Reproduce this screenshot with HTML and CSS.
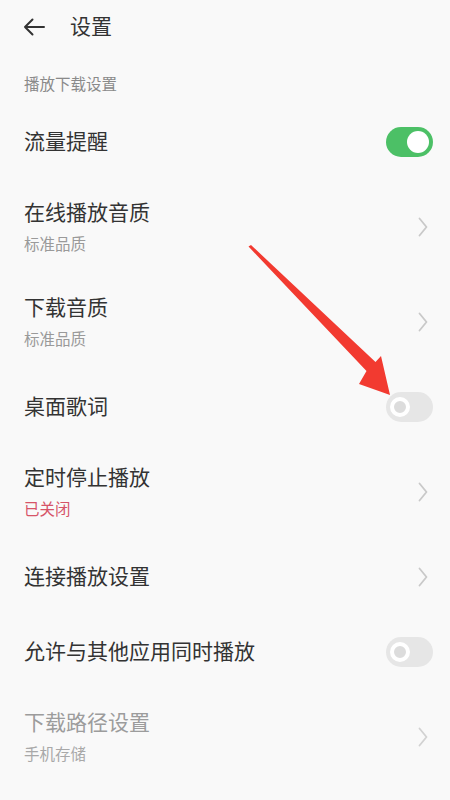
FILE: index.html
```html
<!DOCTYPE html>
<html lang="zh">
<head>
<meta charset="utf-8">
<link rel="stylesheet" href="styles.css">
</head>
<body>
<div class="page">
  <header class="topbar">
    <svg class="back" width="22" height="18" viewBox="0 0 22 18"><path d="M21 9H2M9.5 1.5L2 9l7.5 7.5" fill="none" stroke="#333" stroke-width="2" stroke-linecap="round" stroke-linejoin="round"/></svg>
    <span class="title">设置</span>
  </header>
  <div class="section">播放下载设置</div>
  <div class="list">
    <div class="row single">
      <div class="text"><div class="main">流量提醒</div></div>
      <div class="toggle on"><span class="knob"></span></div>
    </div>
    <div class="row double">
      <div class="text"><div class="main">在线播放音质</div><div class="sub">标准品质</div></div>
      <svg class="chev" width="10" height="20" viewBox="0 0 10 20"><path d="M1.5 1.5L8.5 10l-7 8.5" fill="none" stroke="#c9c9c9" stroke-width="1.8" stroke-linecap="round" stroke-linejoin="round"/></svg>
    </div>
    <div class="row double">
      <div class="text"><div class="main">下载音质</div><div class="sub">标准品质</div></div>
      <svg class="chev" width="10" height="20" viewBox="0 0 10 20"><path d="M1.5 1.5L8.5 10l-7 8.5" fill="none" stroke="#c9c9c9" stroke-width="1.8" stroke-linecap="round" stroke-linejoin="round"/></svg>
    </div>
    <div class="row single">
      <div class="text"><div class="main">桌面歌词</div></div>
      <div class="toggle off"><span class="knob"></span></div>
    </div>
    <div class="row double">
      <div class="text"><div class="main">定时停止播放</div><div class="sub red">已关闭</div></div>
      <svg class="chev" width="10" height="20" viewBox="0 0 10 20"><path d="M1.5 1.5L8.5 10l-7 8.5" fill="none" stroke="#c9c9c9" stroke-width="1.8" stroke-linecap="round" stroke-linejoin="round"/></svg>
    </div>
    <div class="row single">
      <div class="text"><div class="main">连接播放设置</div></div>
      <svg class="chev" width="10" height="20" viewBox="0 0 10 20"><path d="M1.5 1.5L8.5 10l-7 8.5" fill="none" stroke="#c9c9c9" stroke-width="1.8" stroke-linecap="round" stroke-linejoin="round"/></svg>
    </div>
    <div class="row single">
      <div class="text"><div class="main">允许与其他应用同时播放</div></div>
      <div class="toggle off"><span class="knob"></span></div>
    </div>
    <div class="row double disabled">
      <div class="text"><div class="main">下载路径设置</div><div class="sub">手机存储</div></div>
      <svg class="chev" width="10" height="20" viewBox="0 0 10 20"><path d="M1.5 1.5L8.5 10l-7 8.5" fill="none" stroke="#d2d2d2" stroke-width="1.8" stroke-linecap="round" stroke-linejoin="round"/></svg>
    </div>
  </div>
  <svg class="pointer" width="450" height="800" viewBox="0 0 450 800"><polygon points="248.5,246.5 251,245 375.5,362 381,356 390,395 359,384 366.5,371" fill="#f23a30"/></svg>
</div>
</body>
</html>
```

FILE: styles.css
```css
html, body {
  margin: 0;
  padding: 0;
  background: #f9f9f9;
}
body {
  font-family: "Noto Sans CJK SC", "Noto Sans", sans-serif;
  color: #333;
}
.page {
  position: relative;
  width: 450px;
  height: 800px;
  overflow: hidden;
}
.topbar {
  height: 54px;
  display: flex;
  align-items: center;
  padding-left: 23px;
  gap: 25px;
}
.back {
  display: block;
}
.title {
  font-size: 21px;
  line-height: 24px;
  padding-bottom: 4px;
  color: #333;
}
.section {
  margin-top: 20px;
  margin-bottom: 10.5px;
  padding-left: 24px;
  font-size: 15.5px;
  line-height: 18px;
  padding-bottom: 2px;
  color: #8a8a8a;
}
.list {
  display: flex;
  flex-direction: column;
}
.row {
  display: flex;
  align-items: center;
  justify-content: space-between;
  padding-left: 24px;
  padding-right: 17px;
}
.row.single {
  height: 75px;
}
.row.double {
  height: 95px;
}
.text {
  display: flex;
  flex-direction: column;
  gap: 7px;
}
.main {
  font-size: 21px;
  line-height: 24px;
  padding-bottom: 4px;
  color: #333;
}
.sub {
  font-size: 15.5px;
  line-height: 18px;
  padding-bottom: 4px;
  color: #9a9a9a;
}
.sub.red {
  color: #d65468;
}
.disabled .main {
  color: #9c9c9c;
}
.disabled .sub {
  color: #a8a8a8;
}
.chev {
  display: block;
  margin-right: 5px;
}
.toggle {
  width: 47px;
  height: 30px;
  border-radius: 15px;
  display: flex;
  align-items: center;
  box-sizing: border-box;
  padding: 0 4px;
}
.toggle.on {
  background: #4cc066;
  justify-content: flex-end;
}
.toggle.on .knob {
  width: 22px;
  height: 22px;
  border-radius: 50%;
  background: #fff;
}
.toggle.off {
  background: #e6e6e6;
  justify-content: flex-start;
}
.toggle.off .knob {
  width: 20px;
  height: 20px;
  border-radius: 50%;
  box-sizing: border-box;
  border: 4.5px solid #fff;
  background: #dcdcdc;
}
.pointer {
  position: absolute;
  left: 0;
  top: 0;
  pointer-events: none;
}
```
